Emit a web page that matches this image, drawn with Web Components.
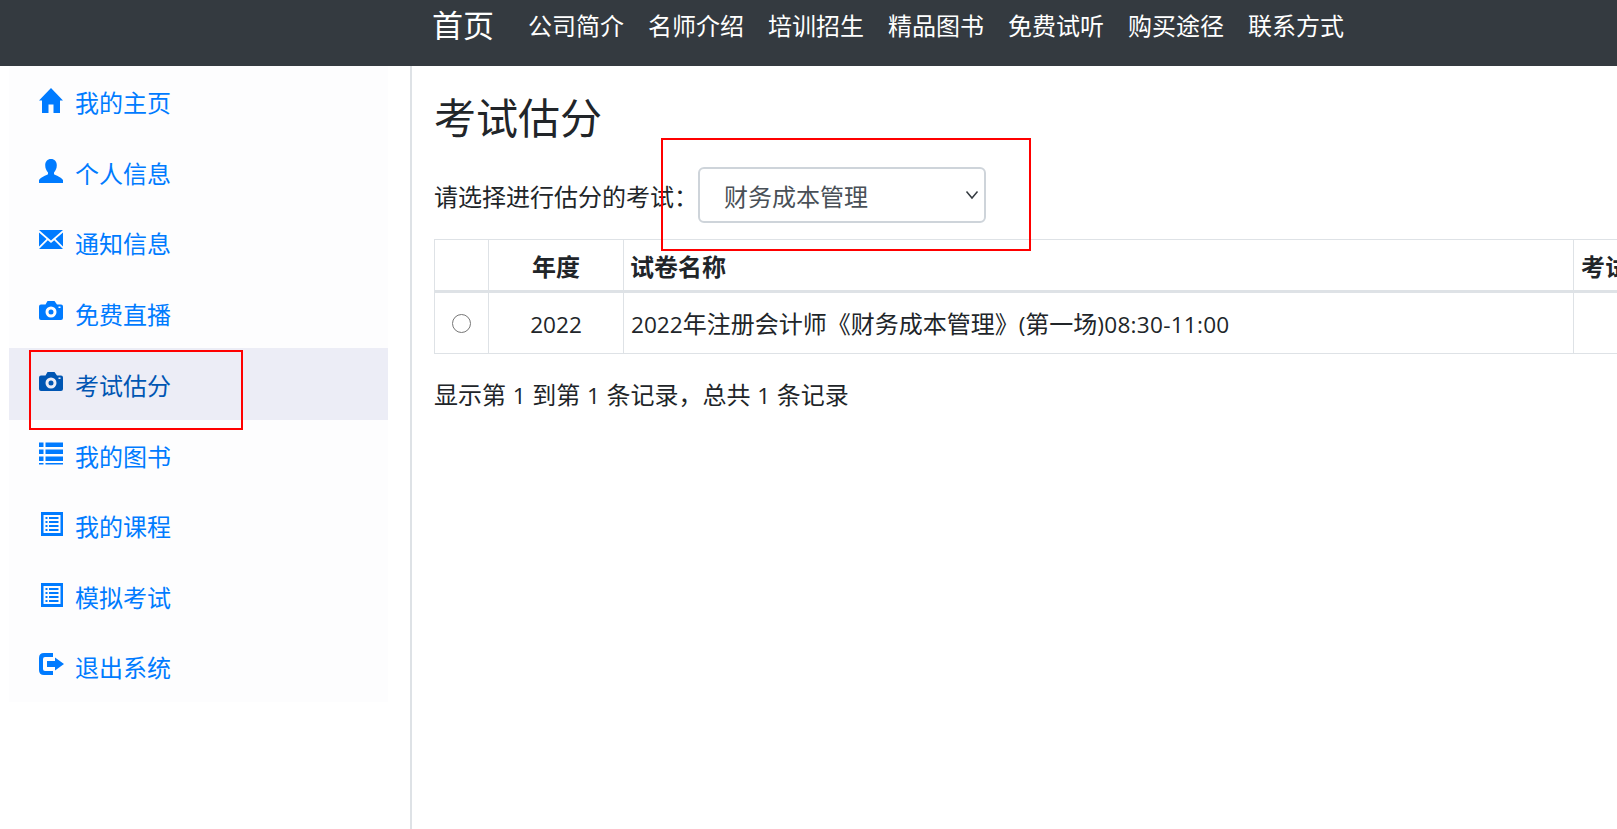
<!DOCTYPE html>
<html lang="zh-CN"><head><meta charset="utf-8"><title>考试估分</title>
<style>
html,body{margin:0;height:100%;overflow:hidden;background:#fff}
body{font-family:"Noto Sans CJK SC",sans-serif;font-size:24px;color:#212529}
</style></head><body>
<app-shell>
  <top-nav slot="nav"></top-nav>
  <side-menu slot="side"></side-menu>
  <exam-page slot="main"></exam-page>
</app-shell>
<script>
function def(name, html){
  customElements.define(name, class extends HTMLElement{
    constructor(){super();const r=this.attachShadow({mode:'open'});r.innerHTML=typeof html==='function'?html(this):html;}
  });
}
def('app-shell',`<style>
:host{display:grid;grid-template-columns:412px 1fr;grid-template-rows:66px 763px;width:1617px;height:829px;overflow:hidden;position:relative}
.n{grid-column:1/3}
</style>
<div class="n"><slot name="nav"></slot></div><slot name="side"></slot><slot name="main"></slot>`);

def('top-nav',`<style>
:host{display:flex;align-items:flex-start;height:66px;background:#343a40;color:#fff;padding-left:432px;box-sizing:border-box}
.b{font-size:31px;line-height:48px;width:62px;margin-right:22px;white-space:nowrap}
a{font-size:24px;line-height:50px;padding:0 12px;color:#fff;white-space:nowrap}
</style>
<span class="b">首页</span><a>公司简介</a><a>名师介绍</a><a>培训招生</a><a>精品图书</a><a>免费试听</a><a>购买途径</a><a>联系方式</a>`);

const I={
home:`<path d="M12 0 24 12.500H21V25H14.500V16.500H9.500V25H3V12.500H0Z"/>`,
user:`<path d="M12 0c3.600 0 5.800 2.700 5.800 6.300 0 3-1.200 5.600-2.800 7.100v1.900c2 1.100 7.100 3.200 9 5.600V24H0v-3.100c1.900-2.400 7-4.500 9-5.600v-1.900C7.400 11.900 6.200 9.300 6.200 6.300 6.200 2.700 8.400 0 12 0Z"/>`,
mail:`<path d="M0 1H24L12 11.500ZM0 3.500V17.500L7.500 10ZM24 3.500V17.500L16.500 10ZM8.800 11.200 12 14 15.200 11.200 24 20H0Z"/>`,
cam:`<path fill-rule="evenodd" d="M2 4.500H6.500L8.500 1H15.500L18 4.500H22Q24 4.500 24 6.500V18Q24 20 22 20H2Q0 20 0 18V6.500Q0 4.500 2 4.500ZM12 6.500A5.500 5.500 0 1 0 12 17.500 5.500 5.500 0 0 0 12 6.500ZM12 9.500A2.500 2.500 0 1 1 12 14.500 2.500 2.500 0 0 1 12 9.500ZM19.500 6.500H21.500V8H19.500Z"/>`,
list:`<path d="M0 0H4.500V4.500H0ZM6.500 0H24V4.500H6.500ZM0 7H4.500V11.500H0ZM6.500 7H24V11.500H6.500ZM0 14H4.500V18.500H0ZM6.500 14H24V18.500H6.500ZM0 20.500H4.500V22H0ZM6.500 20.500H24V22H6.500Z" transform="translate(0 .500)"/>`,
alt:`<path fill-rule="evenodd" d="M2 0H24V24H2ZM4.500 3V21H21.500V3ZM6.500 5H8.500V7H6.500ZM10 5H19.500V7H10ZM6.500 9H8.500V11H6.500ZM10 9H19.500V11H10ZM6.500 13H8.500V15H6.500ZM10 13H19.500V15H10ZM6.500 17H8.500V19H6.500ZM10 17H19.500V19H10Z"/>`,
out:`<path d="M5 0H14V4H6Q4 4 4 6V16Q4 18 6 18H14V22H5Q0 22 0 17V5Q0 0 5 0ZM16 4.500 25 11 16 17.500V14H8V8H16Z"/>`
};
def('menu-item',h=>{
 const a=h.hasAttribute('active');
 const pt=h.getAttribute('pt')||0;
 return `<style>
:host{display:flex;align-items:center;height:${a?72:70.5}px;box-sizing:border-box;padding-left:30px;padding-top:${pt}px;font-size:24px;color:${a?'#0056b3':'#007bff'};background:${a?'#ecedf6':'transparent'}}
svg{width:25px;height:25px;flex:none;margin-right:11px;fill:currentColor;position:relative;top:-1px}
</style><svg viewBox="0 0 25 25">${I[h.getAttribute('icon')]}</svg><slot></slot>`});

def('side-menu',`<style>
:host{display:block;position:relative;box-sizing:border-box;border-right:2px solid #dee2e6;padding-left:9px;padding-right:22px;height:763px}
.m{background:#fdfdfe;height:636px}
.mark{position:absolute;border:2px solid #f00;box-sizing:border-box;left:29px;top:284px;width:214px;height:80px}
</style><div class="m">
<menu-item icon="home" pt="1">我的主页</menu-item>
<menu-item icon="user" pt="2">个人信息</menu-item>
<menu-item icon="mail" pt="1">通知信息</menu-item>
<menu-item icon="cam" pt="2">免费直播</menu-item>
<menu-item icon="cam" active>考试估分</menu-item>
<menu-item icon="list">我的图书</menu-item>
<menu-item icon="alt">我的课程</menu-item>
<menu-item icon="alt">模拟考试</menu-item>
<menu-item icon="out">退出系统</menu-item>
</div><div class="mark"></div>`);

def('exam-select',`<style>
:host{display:inline-flex;align-items:center;justify-content:space-between;box-sizing:border-box;width:288px;height:56px;border:2px solid #ced4da;border-radius:6px;padding:0 5px 0 24px;color:#495057;background:#fff}
svg{width:14px;height:10px;fill:none;stroke:#343a40;stroke-width:1.500}
</style><slot></slot><svg viewBox="0 0 14 10"><path d="M1.500 1.500 7 8 12.500 1.500"/></svg>`);

def('data-table',`<style>
:host{display:block;width:1300px;margin-top:16px}
table{border-collapse:collapse;table-layout:fixed;width:1300px;font-size:24px}
th,td{border:1px solid #dee2e6;padding:0 7px;text-align:left;white-space:nowrap;overflow:hidden;box-sizing:border-box}
th{height:52px;font-weight:700;border-bottom:3px solid #dee2e6}
td{height:62px;padding-bottom:2px}
.c{text-align:center}
input{width:19px;height:19px;margin:0;vertical-align:middle;position:relative;top:-2px}
.l{font-family:"Open Sans","Noto Sans CJK SC",sans-serif;font-size:22.600px}
.s{letter-spacing:.25px}
</style><table><colgroup><col style="width:54px"><col style="width:135px"><col style="width:950px"><col style="width:161px"></colgroup>
<thead><tr><th></th><th class="c">年度</th><th style="padding-left:6px">试卷名称</th><th>考试</th></tr></thead>
<tbody><tr><td class="c"><input type="radio" name="r"></td><td class="c"><span class="l">2022</span></td><td><span class="l">2022</span>年注册会计师《财务成本管理》<span class="l">(</span>第一场<span class="l s">)08:30-11:00</span></td><td></td></tr></tbody></table>`);

def('exam-page',`<style>
:host{display:block;position:relative;padding-left:22px;overflow:hidden;height:763px;color:#212529}
h1{margin:0;font-size:42px;font-weight:400;line-height:62px;padding-top:19px}
.f{display:flex;align-items:center;margin-top:20px;height:56px;white-space:nowrap}
.f span{width:264px}
.foot{margin-top:22px;line-height:36px;white-space:pre;word-spacing:1.300px}
.foot b{font:inherit;font-family:"Open Sans",sans-serif;font-size:22.600px}
.mark{position:absolute;border:2px solid #f00;box-sizing:border-box;pointer-events:none;left:249px;top:72px;width:370px;height:113px}
</style>
<h1>考试估分</h1>
<div class="f"><span>请选择进行估分的考试：</span><exam-select>财务成本管理</exam-select></div>
<data-table></data-table>
<div class="foot">显示第 <b>1</b> 到第 <b>1</b> 条记录，总共 <b>1</b> 条记录</div>
<div class="mark"></div>`);
</script>
</body></html>
